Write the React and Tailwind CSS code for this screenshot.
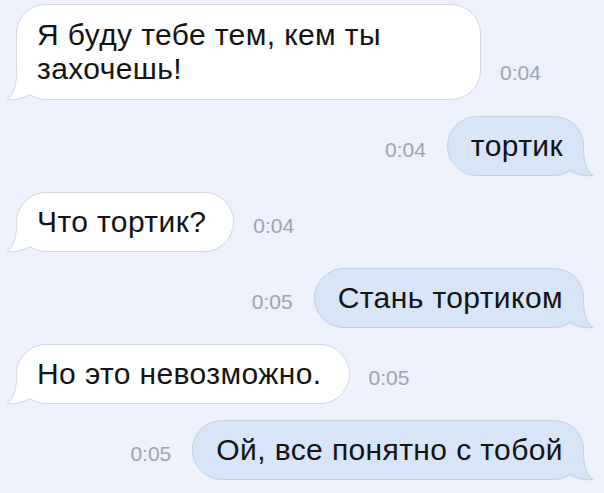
import React from "react";

const messages = [
  { id: 1, side: "in", text: "Я буду тебе тем, кем ты захочешь!", time: "0:04", wide: true },
  { id: 2, side: "out", text: "тортик", time: "0:04" },
  { id: 3, side: "in", text: "Что тортик?", time: "0:04" },
  { id: 4, side: "out", text: "Стань тортиком", time: "0:05" },
  { id: 5, side: "in", text: "Но это невозможно.", time: "0:05" },
  { id: 6, side: "out", text: "Ой, все понятно с тобой", time: "0:05" },
];

// хвостик пузыря, рисуется поверх угла
const TailIn = () => (
  <svg width="30" height="26" viewBox="0 0 30 26" className="absolute -left-[10px] bottom-0 overflow-visible">
    <path d="M10.5 0 C10.5 12 7 21 1 25.5 C9 26.5 17 24.5 24 20.4 L27 14 L14 0 Z" fill="#ffffff" />
    <path d="M10.5 0 C10.5 12 7 21 1 25.5 C9 26.5 17 24.5 24 20.4" fill="none" stroke="#d3d8e1" strokeWidth="1" />
  </svg>
);

const TailOut = () => (
  <svg width="30" height="26" viewBox="0 0 30 26" className="absolute -right-[10px] bottom-0 overflow-visible">
    <path d="M19.5 0 C19.5 12 23 21 29 25.5 C21 26.5 13 24.5 6 20.4 L3 14 L16 0 Z" fill="#d8e5f8" />
    <path d="M19.5 0 C19.5 12 23 21 29 25.5 C21 26.5 13 24.5 6 20.4" fill="none" stroke="#c2cee2" strokeWidth="1" />
  </svg>
);

const Time = ({ children, className }) => (
  <span className={"text-[21px] leading-none text-[#9ea4ad] " + className}>{children}</span>
);

const Bubble = ({ msg }) => {
  if (msg.side === "in") {
    return (
      <div className="relative">
        <div
          className={
            msg.wide
              ? "w-[465px] rounded-[30px] border border-[#d3d8e1] bg-white pl-[20px] pr-6 py-[13px] text-[30px] tracking-[0.4px] leading-[34px] text-[#141414]"
              : "rounded-[30px] border border-[#d3d8e1] bg-white pl-[20px] pr-[27px] py-[12px] text-[30px] tracking-[0.4px] leading-[34px] text-[#141414] whitespace-nowrap"
          }
        >
          {msg.text}
        </div>
        <TailIn />
      </div>
    );
  }
  return (
    <div className="relative">
      <div className="rounded-[30px] border border-[#c2cee2] bg-[#d8e5f8] pl-[23px] pr-[20px] py-[12px] text-[30px] tracking-[0.4px] leading-[34px] text-[#141414] whitespace-nowrap">
        {msg.text}
      </div>
      <TailOut />
    </div>
  );
};

export default function App() {
  return (
    <div className="w-full h-[493px] overflow-hidden bg-[#edf1fb] font-['Liberation_Sans',Arial,sans-serif] pl-4 pr-[20px] pt-1 flex flex-col gap-4">
      {messages.map((msg) =>
        msg.side === "in" ? (
          <div key={msg.id} className="flex items-end justify-start">
            <Bubble msg={msg} />
            <Time className={"ml-[19px] " + (msg.wide ? "mb-[17px]" : "mb-[16px]")}>{msg.time}</Time>
          </div>
        ) : (
          <div key={msg.id} className="flex items-end justify-end">
            <Time className="mr-[21px] mb-[16px]">{msg.time}</Time>
            <Bubble msg={msg} />
          </div>
        )
      )}
    </div>
  );
}
